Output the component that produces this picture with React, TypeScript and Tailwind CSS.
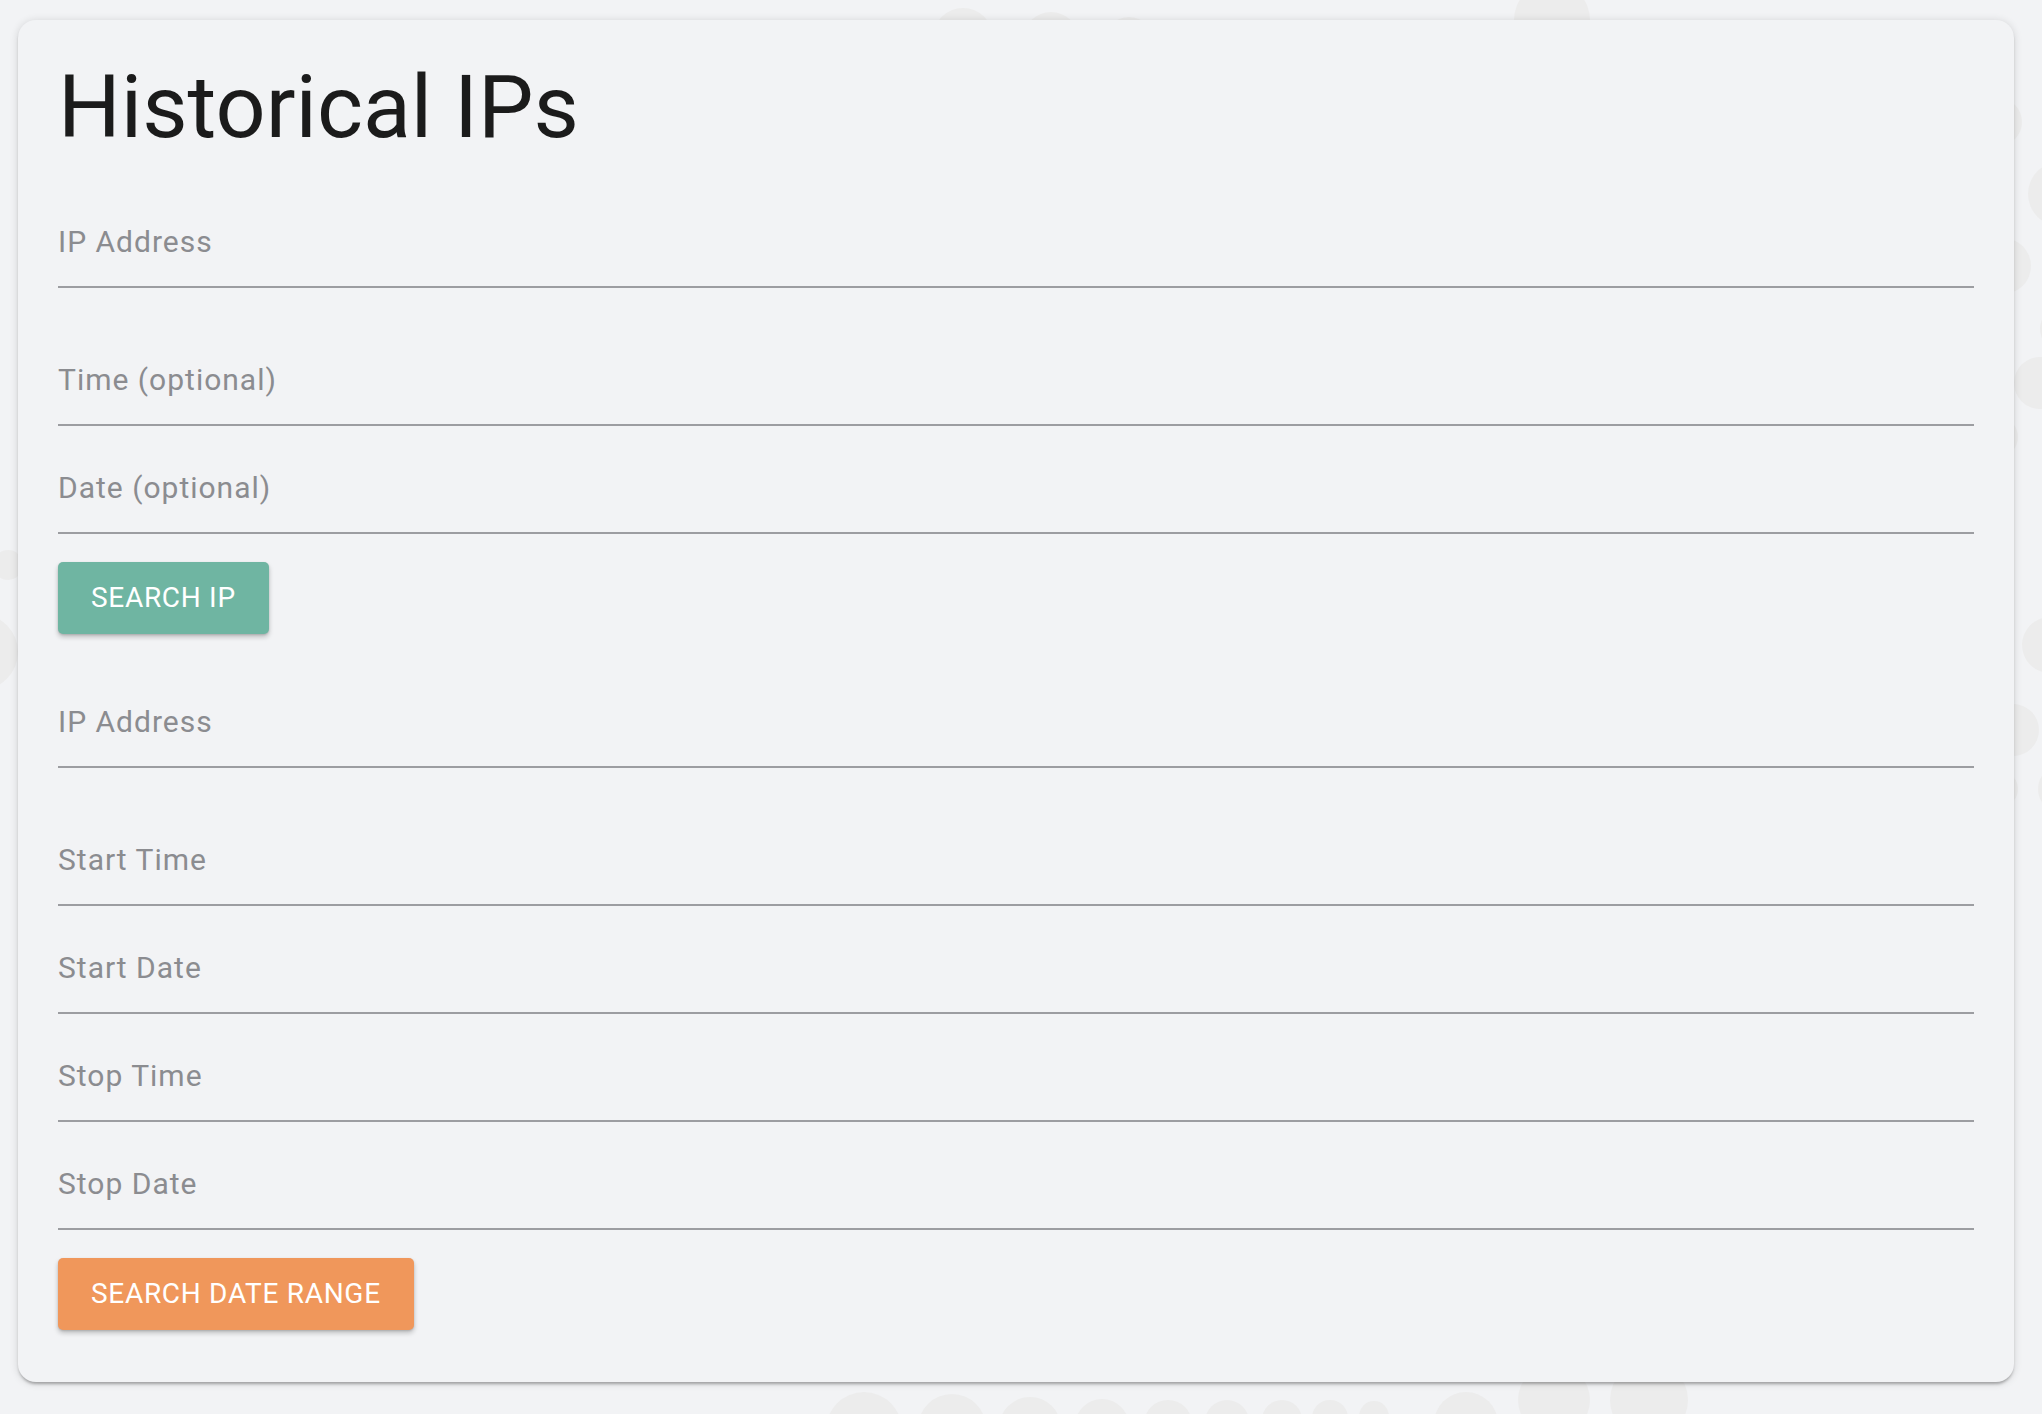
import React from "react";

const font = { fontFamily: "Roboto, 'Noto Sans', Arial, sans-serif" };

type Dot = { x: number; y: number; d: number };

const dots: Dot[] = [
  // top
  { x: 963, y: 38, d: 60 },
  { x: 1051, y: 40, d: 56 },
  { x: 1129, y: 42, d: 50 },
  { x: 1202, y: 40, d: 40 },
  { x: 1267, y: 42, d: 36 },
  { x: 1327, y: 44, d: 30 },
  { x: 913, y: -10, d: 20 },
  { x: 1552, y: 20, d: 76 },
  // bottom
  { x: 864, y: 1430, d: 76 },
  { x: 952, y: 1428, d: 68 },
  { x: 1030, y: 1428, d: 62 },
  { x: 1102, y: 1426, d: 54 },
  { x: 1168, y: 1424, d: 48 },
  { x: 1227, y: 1422, d: 44 },
  { x: 1282, y: 1420, d: 40 },
  { x: 1330, y: 1418, d: 36 },
  { x: 1374, y: 1416, d: 30 },
  { x: 1466, y: 1424, d: 64 },
  { x: 1554, y: 1400, d: 72 },
  { x: 1649, y: 1400, d: 78 },
  // right
  { x: 1998, y: 122, d: 48 },
  { x: 2060, y: 194, d: 64 },
  { x: 2003, y: 266, d: 56 },
  { x: 2062, y: 329, d: 44 },
  { x: 2040, y: 383, d: 52 },
  { x: 1998, y: 437, d: 40 },
  { x: 2050, y: 645, d: 56 },
  { x: 2013, y: 730, d: 52 },
  { x: 2000, y: 789, d: 36 },
  { x: 2062, y: 789, d: 48 },
  // left
  { x: 8, y: 565, d: 30 },
  { x: -20, y: 652, d: 76 },
];

function Field({ label, extra = false }: { label: string; extra?: boolean }) {
  return (
    <div
      className={`h-[108px] flex items-end border-b-2 border-[#9c9da1] ${extra ? "mb-[30px]" : ""}`}
    >
      <span className="text-[30px] leading-[30px] tracking-[1px] pb-[29px] text-[#8b8c90]" style={font}>
        {label}
      </span>
    </div>
  );
}

function Btn({ label, color }: { label: string; color: string }) {
  return (
    <div className="flex">
      <button
        className={`h-[72px] px-[33px] rounded-[5px] flex items-center text-white text-[28px] leading-[28px] tracking-[0.7px] uppercase shadow-[0_3px_5px_rgba(0,0,0,0.22),0_1px_2px_rgba(0,0,0,0.12)] ${color}`}
        style={font}
      >
        {label}
      </button>
    </div>
  );
}

export default function App() {
  return (
    <div className="relative w-[2042px] h-[1414px] overflow-hidden bg-[#f2f3f5]">
      {dots.map((c, i) => (
        <div
          key={i}
          className="absolute rounded-full bg-[#ececec]"
          style={{ left: c.x - c.d / 2, top: c.y - c.d / 2, width: c.d, height: c.d }}
        />
      ))}
      <div className="relative z-10 ml-[18px] pt-[20px]">
        <div className="w-[1996px] h-[1362px] rounded-[18px] bg-[#f2f3f5] px-10 pt-[43px] shadow-[0_3px_3px_-1px_rgba(0,0,0,0.28),0_1px_8px_rgba(0,0,0,0.14)]">
          <h1 className="text-[88px] leading-[88px] text-[#1b1b1b] font-normal mb-[29px]" style={font}>
            Historical IPs
          </h1>
          <Field label="IP Address" extra />
          <Field label="Time (optional)" />
          <Field label="Date (optional)" />
          <div className="mt-[28px]">
            <Btn label="Search IP" color="bg-[#6fb5a2]" />
          </div>
          <div className="mt-[26px]">
            <Field label="IP Address" extra />
            <Field label="Start Time" />
            <Field label="Start Date" />
            <Field label="Stop Time" />
            <Field label="Stop Date" />
          </div>
          <div className="mt-[28px]">
            <Btn label="Search Date Range" color="bg-[#f0975b]" />
          </div>
        </div>
      </div>
    </div>
  );
}
